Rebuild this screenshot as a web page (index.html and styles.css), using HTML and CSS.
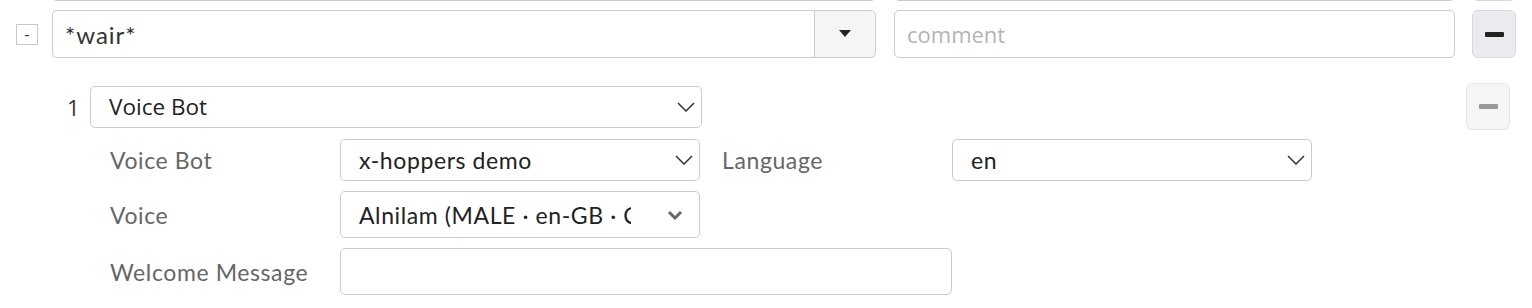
FILE: index.html
```html
<!DOCTYPE html>
<html lang="en">
<head>
    <meta charset="UTF-8">
    <title>Rules</title>
    <link rel="stylesheet" href="styles.css">
</head>
<body>

<div class="entry prev">
    <span class="toggle hidden"></span>
    <div class="input-group">
        <input type="text" class="pattern" value="">
        <button class="drop-btn"></button>
    </div>
    <input type="text" class="comment" value="">
    <button class="remove-btn"></button>
</div>

<div class="entry">
    <span class="toggle">-</span>
    <div class="input-group">
        <input type="text" class="pattern" value="*wair*">
        <button class="drop-btn">
            <svg width="12" height="8" viewBox="0 0 12 8"><path d="M0 0 H12 L6 7 Z" fill="#222"/></svg>
        </button>
    </div>
    <input type="text" class="comment" placeholder="comment">
    <button class="remove-btn"><span class="bar"></span></button>
</div>

<div class="step">
    <div class="step-head">
        <span class="step-num">1</span>
        <div class="select wide">
            <span class="select-text">Voice Bot</span>
            <svg class="chevron" width="18" height="10" viewBox="0 0 18 10"><path d="M1 1 L9 9 L17 1" fill="none" stroke="#333" stroke-width="1.5"/></svg>
        </div>
        <button class="remove-btn disabled"><span class="bar"></span></button>
    </div>

    <div class="fields">
        <label class="field-label">Voice Bot</label>
        <div class="select">
            <span class="select-text">x-hoppers demo</span>
            <svg class="chevron" width="18" height="10" viewBox="0 0 18 10"><path d="M1 1 L9 9 L17 1" fill="none" stroke="#333" stroke-width="1.5"/></svg>
        </div>
        <label class="field-label lang">Language</label>
        <div class="select">
            <span class="select-text">en</span>
            <svg class="chevron" width="18" height="10" viewBox="0 0 18 10"><path d="M1 1 L9 9 L17 1" fill="none" stroke="#333" stroke-width="1.5"/></svg>
        </div>

        <label class="field-label">Voice</label>
        <div class="select voice">
            <span class="select-text clip">Alnilam (MALE · en-GB · Chirp3 HD)</span>
            <svg class="chevron" width="16" height="10" viewBox="0 0 16 10"><path d="M2 2 L8 8 L14 2" fill="none" stroke="#666" stroke-width="3"/></svg>
        </div>
        <span></span>
        <span></span>

        <label class="field-label">Welcome Message</label>
        <input type="text" class="message">
    </div>
</div>

</body>
</html>
```

FILE: styles.css
```css
body {
    margin: 0;
    font-family: Lato, "Noto Sans", sans-serif;
    color: #333;
    background: #fff;
}
.entry {
    display: flex;
    align-items: center;
    height: 48px;
    margin-top: 9px;
}
.entry.prev {
    margin-top: -47px;
}
.toggle {
    width: 20px;
    height: 19px;
    margin: 0 14px 0 16px;
    border: 1px solid #c8c8c8;
    font-size: 16px;
    line-height: 17px;
    text-align: center;
    color: #333;
    box-sizing: content-box;
}
.toggle.hidden {
    visibility: hidden;
}
.input-group {
    display: flex;
    width: 824px;
    height: 48px;
}
input {
    font-family: inherit;
    color: #333;
    outline: none;
}
.pattern {
    flex: 1;
    height: 48px;
    box-sizing: border-box;
    border: 1px solid #ccc;
    border-right: none;
    border-radius: 5px 0 0 5px;
    padding: 0 12px;
    font-size: 24px;
    letter-spacing: 1px;
}
.drop-btn {
    width: 62px;
    height: 48px;
    border: 1px solid #ccc;
    border-radius: 0 5px 5px 0;
    background: #f5f5f5;
    display: flex;
    align-items: center;
    justify-content: center;
    padding: 0;
}
.comment {
    width: 561px;
    height: 48px;
    box-sizing: border-box;
    margin-left: 18px;
    border: 1px solid #ccc;
    border-radius: 5px;
    padding: 0 12px;
    font-family: "Open Sans", sans-serif;
    font-size: 22px;
}
.comment::placeholder {
    color: #b4b4b4;
}
.remove-btn {
    width: 44px;
    height: 48px;
    margin-left: 17px;
    border: 1px solid #d6d8db;
    border-radius: 6px;
    background: #e9ebee;
    display: flex;
    align-items: center;
    justify-content: center;
    padding: 0;
}
.bar {
    width: 19px;
    height: 5px;
    border-radius: 1px;
    background: #222;
}
.step {
    padding-left: 62px;
    margin-top: 25px;
}
.step-head {
    display: flex;
    align-items: center;
}
.step-num {
    width: 28px;
    font-size: 22px;
    font-family: "Open Sans", sans-serif;
    text-align: left;
    padding-left: 5px;
    box-sizing: border-box;
}
.select {
    display: flex;
    align-items: center;
    justify-content: space-between;
    height: 42px;
    box-sizing: border-box;
    border: 1px solid #ccc;
    border-radius: 5px;
    padding: 0 6px 0 18px;
    font-size: 23px;
    letter-spacing: 0.6px;
    color: #222;
    background: #fff;
}
.select.wide {
    width: 612px;
    font-family: "Open Sans", sans-serif;
    font-size: 22.5px;
    letter-spacing: 0;
}
.chevron {
    flex: none;
}
.remove-btn.disabled {
    margin-left: auto;
    margin-right: 22px;
    height: 47px;
    background: #f4f5f7;
    border-color: #e3e5e8;
}
.remove-btn.disabled .bar {
    background: #9a9a9a;
    height: 5px;
}
.fields {
    display: grid;
    grid-template-columns: 230px 360px 252px 360px;
    row-gap: 10px;
    margin-top: 9px;
    padding-left: 48px;
    align-items: center;
}
.field-label {
    font-size: 23px;
    letter-spacing: 0.6px;
    color: #666;
}
.field-label.lang {
    padding-left: 22px;
}
.fields .select {
    width: 360px;
}
.select.voice {
    height: 47px;
    padding-right: 16px;
}
.clip {
    overflow: hidden;
    white-space: nowrap;
    width: 272px;
}
.message {
    grid-column: 2 / 4;
    width: 612px;
    height: 47px;
    box-sizing: border-box;
    border: 1px solid #ccc;
    border-radius: 5px;
}
```
